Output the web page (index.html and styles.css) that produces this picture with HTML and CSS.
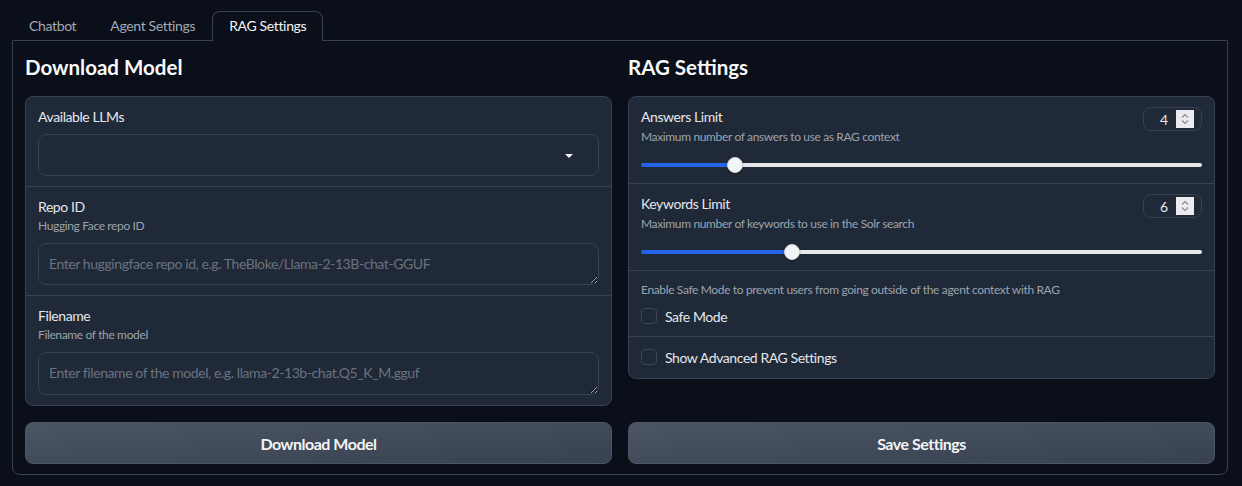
FILE: index.html
```html
<!DOCTYPE html>
<html lang="en">
<head>
<meta charset="utf-8">
<title>RAG Settings</title>
<link rel="stylesheet" href="styles.css">
</head>
<body>
<div class="app">
  <div class="tab-nav">
    <button class="tab">Chatbot</button>
    <button class="tab">Agent Settings</button>
    <button class="tab selected">RAG Settings</button>
  </div>
  <div class="tabitem">
    <div class="cols">
      <div class="col">
        <h2 class="heading">Download Model</h2>
        <div class="card">
          <div class="section">
            <div class="label">Available LLMs</div>
            <div class="dropdown">
              <input class="dd-input" type="text" aria-label="Available LLMs">
              <svg class="dd-arrow" viewBox="0 0 18 18" width="18" height="18"><path d="M5 8l4 4 4-4z" fill="#f3f4f6"/></svg>
            </div>
          </div>
          <div class="section">
            <div class="label">Repo ID</div>
            <div class="info">Hugging Face repo ID</div>
            <textarea class="textarea" rows="1" placeholder="Enter huggingface repo id, e.g. TheBloke/Llama-2-13B-chat-GGUF"></textarea>
          </div>
          <div class="section">
            <div class="label">Filename</div>
            <div class="info">Filename of the model</div>
            <textarea class="textarea last" rows="1" placeholder="Enter filename of the model, e.g. llama-2-13b-chat.Q5_K_M.gguf"></textarea>
          </div>
        </div>
      </div>
      <div class="col">
        <h2 class="heading">RAG Settings</h2>
        <div class="card">
          <div class="section slider-section">
            <div class="slider-head">
              <div>
                <div class="label">Answers Limit</div>
                <div class="info spaced">Maximum number of answers to use as RAG context</div>
              </div>
              <div class="num">
                <input class="num-input" type="text" value="4" aria-label="Answers Limit">
                <span class="spin"><svg viewBox="0 0 18 18" width="18" height="18"><path d="M6 7.5l3-3 3 3M6 10.5l3 3 3-3" fill="none" stroke="#8b8b93" stroke-width="1.2"/></svg></span>
              </div>
            </div>
            <div class="range-wrap"><input class="range" type="range" min="1" max="20" value="4" style="--p:16.8%"></div>
          </div>
          <div class="section slider-section">
            <div class="slider-head">
              <div>
                <div class="label">Keywords Limit</div>
                <div class="info spaced">Maximum number of keywords to use in the Solr search</div>
              </div>
              <div class="num">
                <input class="num-input" type="text" value="6" aria-label="Keywords Limit">
                <span class="spin"><svg viewBox="0 0 18 18" width="18" height="18"><path d="M6 7.5l3-3 3 3M6 10.5l3 3 3-3" fill="none" stroke="#8b8b93" stroke-width="1.2"/></svg></span>
              </div>
            </div>
            <div class="range-wrap"><input class="range" type="range" min="1" max="20" value="6" style="--p:27%"></div>
          </div>
          <div class="section">
            <div class="info">Enable Safe Mode to prevent users from going outside of the agent context with RAG</div>
            <label class="check-row gap-top"><input class="check" type="checkbox"><span>Safe Mode</span></label>
          </div>
          <div class="section last-section">
            <label class="check-row"><input class="check" type="checkbox"><span>Show Advanced RAG Settings</span></label>
          </div>
        </div>
      </div>
    </div>
    <div class="actions">
      <button class="btn">Download Model</button>
      <button class="btn">Save Settings</button>
    </div>
  </div>
</div>
</body>
</html>
```

FILE: styles.css
```css
* { box-sizing: border-box; }
html, body {
  margin: 0;
  background: #0b0f19;
  font-family: "Lato", "Liberation Sans", sans-serif;
  color: #e5e7eb;
}
.app {
  padding: 11px 14px 0 12px;
}
.tab-nav {
  display: flex;
  position: relative;
  z-index: 1;
}
.tab {
  font: inherit;
  font-size: 14px;
  letter-spacing: -0.025em;
  line-height: 20px;
  padding: 4px 16px;
  border: 1px solid transparent;
  border-bottom: none;
  background: transparent;
  color: #a3aab6;
  margin: 0;
  border-radius: 8px 8px 0 0;
}
.tab.selected {
  border-color: #374151;
  background: #0b0f19;
  color: #f3f4f6;
  padding-bottom: 5px;
  margin-bottom: -1px;
}
.tabitem {
  border: 1px solid #374151;
  border-radius: 0 0 8px 8px;
  padding: 12px 12px 10px;
}
.cols, .actions {
  display: grid;
  grid-template-columns: 1fr 1fr;
  column-gap: 16px;
}
.col {
  display: flex;
  flex-direction: column;
  align-items: stretch;
}
.heading {
  margin: 0;
  font-size: 20.5px;
  line-height: 28px;
  font-weight: 700;
  color: #f9fafb;
  margin-bottom: 15px;
}
.card {
  background: #1f2937;
  border: 1px solid #374151;
  border-radius: 8px;
  overflow: hidden;
}
.section {
  padding: 10px 12px;
}
.section + .section {
  border-top: 1px solid #374151;
}
.slider-section {
  padding-bottom: 9px;
}
.last-section {
  padding-bottom: 11px;
}
.label {
  font-size: 14px;
  letter-spacing: -0.03em;
  line-height: 20px;
  color: #e5e7eb;
}
.info {
  font-size: 12px;
  letter-spacing: -0.03em;
  line-height: 18px;
  color: #9ca3af;
}
.info.spaced {
  margin-top: 1px;
}
.dropdown {
  position: relative;
  margin-top: 7px;
  height: 42px;
}
.dd-input {
  width: 100%;
  height: 42px;
  background: #1f2937;
  border: 1px solid #374151;
  border-radius: 8px;
  padding: 10px;
  color: #e5e7eb;
  font: inherit;
  font-size: 14px;
  outline: none;
}
.dd-arrow {
  position: absolute;
  right: 21px;
  top: 12px;
}
.textarea {
  display: block;
  width: 100%;
  height: 42px;
  margin-top: 8px;
  background: #1f2937;
  border: 1px solid #374151;
  border-radius: 8px;
  padding: 10px;
  font: inherit;
  font-size: 14px;
  letter-spacing: -0.03em;
  line-height: 20px;
  color: #e5e7eb;
  outline: none;
  resize: vertical;
}
.textarea.last {
  height: 43px;
}
.textarea::placeholder {
  color: #6b7280;
}
.slider-head {
  display: flex;
  justify-content: space-between;
  align-items: flex-start;
}
.num {
  display: flex;
  align-items: center;
  width: 59px;
  height: 24px;
  padding: 0 7px 0 8px;
  border: 1px solid #374151;
  border-radius: 8px;
  background: #1f2937;
}
.num-input {
  flex: 1;
  min-width: 0;
  width: 100%;
  border: none;
  padding: 0;
  background: transparent;
  color: #e5e7eb;
  font: inherit;
  font-size: 14px;
  text-align: center;
  outline: none;
}
.spin {
  display: flex;
  width: 18px;
  height: 18px;
  background: #ececf0;
}
.range-wrap {
  height: 18px;
  margin-top: 10px;
  display: flex;
  align-items: center;
}
.range {
  -webkit-appearance: none;
  appearance: none;
  width: 100%;
  height: 4px;
  margin: 0;
  border-radius: 4px;
  background: linear-gradient(to right, #2563eb var(--p), #e5e7eb var(--p));
  outline: none;
}
.range::-webkit-slider-thumb {
  -webkit-appearance: none;
  appearance: none;
  width: 16px;
  height: 16px;
  border-radius: 50%;
  background: #f3f4f6;
  border: 1px solid #d1d5db;
  box-shadow: 0 1px 2px rgba(0,0,0,0.3);
}
.check-row {
  display: flex;
  align-items: center;
  gap: 8px;
  height: 20px;
  font-size: 14px;
  letter-spacing: -0.03em;
  color: #e5e7eb;
}
.gap-top {
  margin-top: 7px;
}
.check {
  -webkit-appearance: none;
  appearance: none;
  width: 16px;
  height: 16px;
  margin: 0;
  border: 1px solid #3d4757;
  border-radius: 4px;
  background: #1f2937;
}
.actions {
  margin-top: 16px;
}
.btn {
  height: 42px;
  border: 1px solid #4b5563;
  border-radius: 8px;
  background: linear-gradient(to bottom right, #4b5563, #374151);
  color: #f3f4f6;
  font: inherit;
  font-size: 16px;
  letter-spacing: -0.03em;
  font-weight: 700;
}
```
